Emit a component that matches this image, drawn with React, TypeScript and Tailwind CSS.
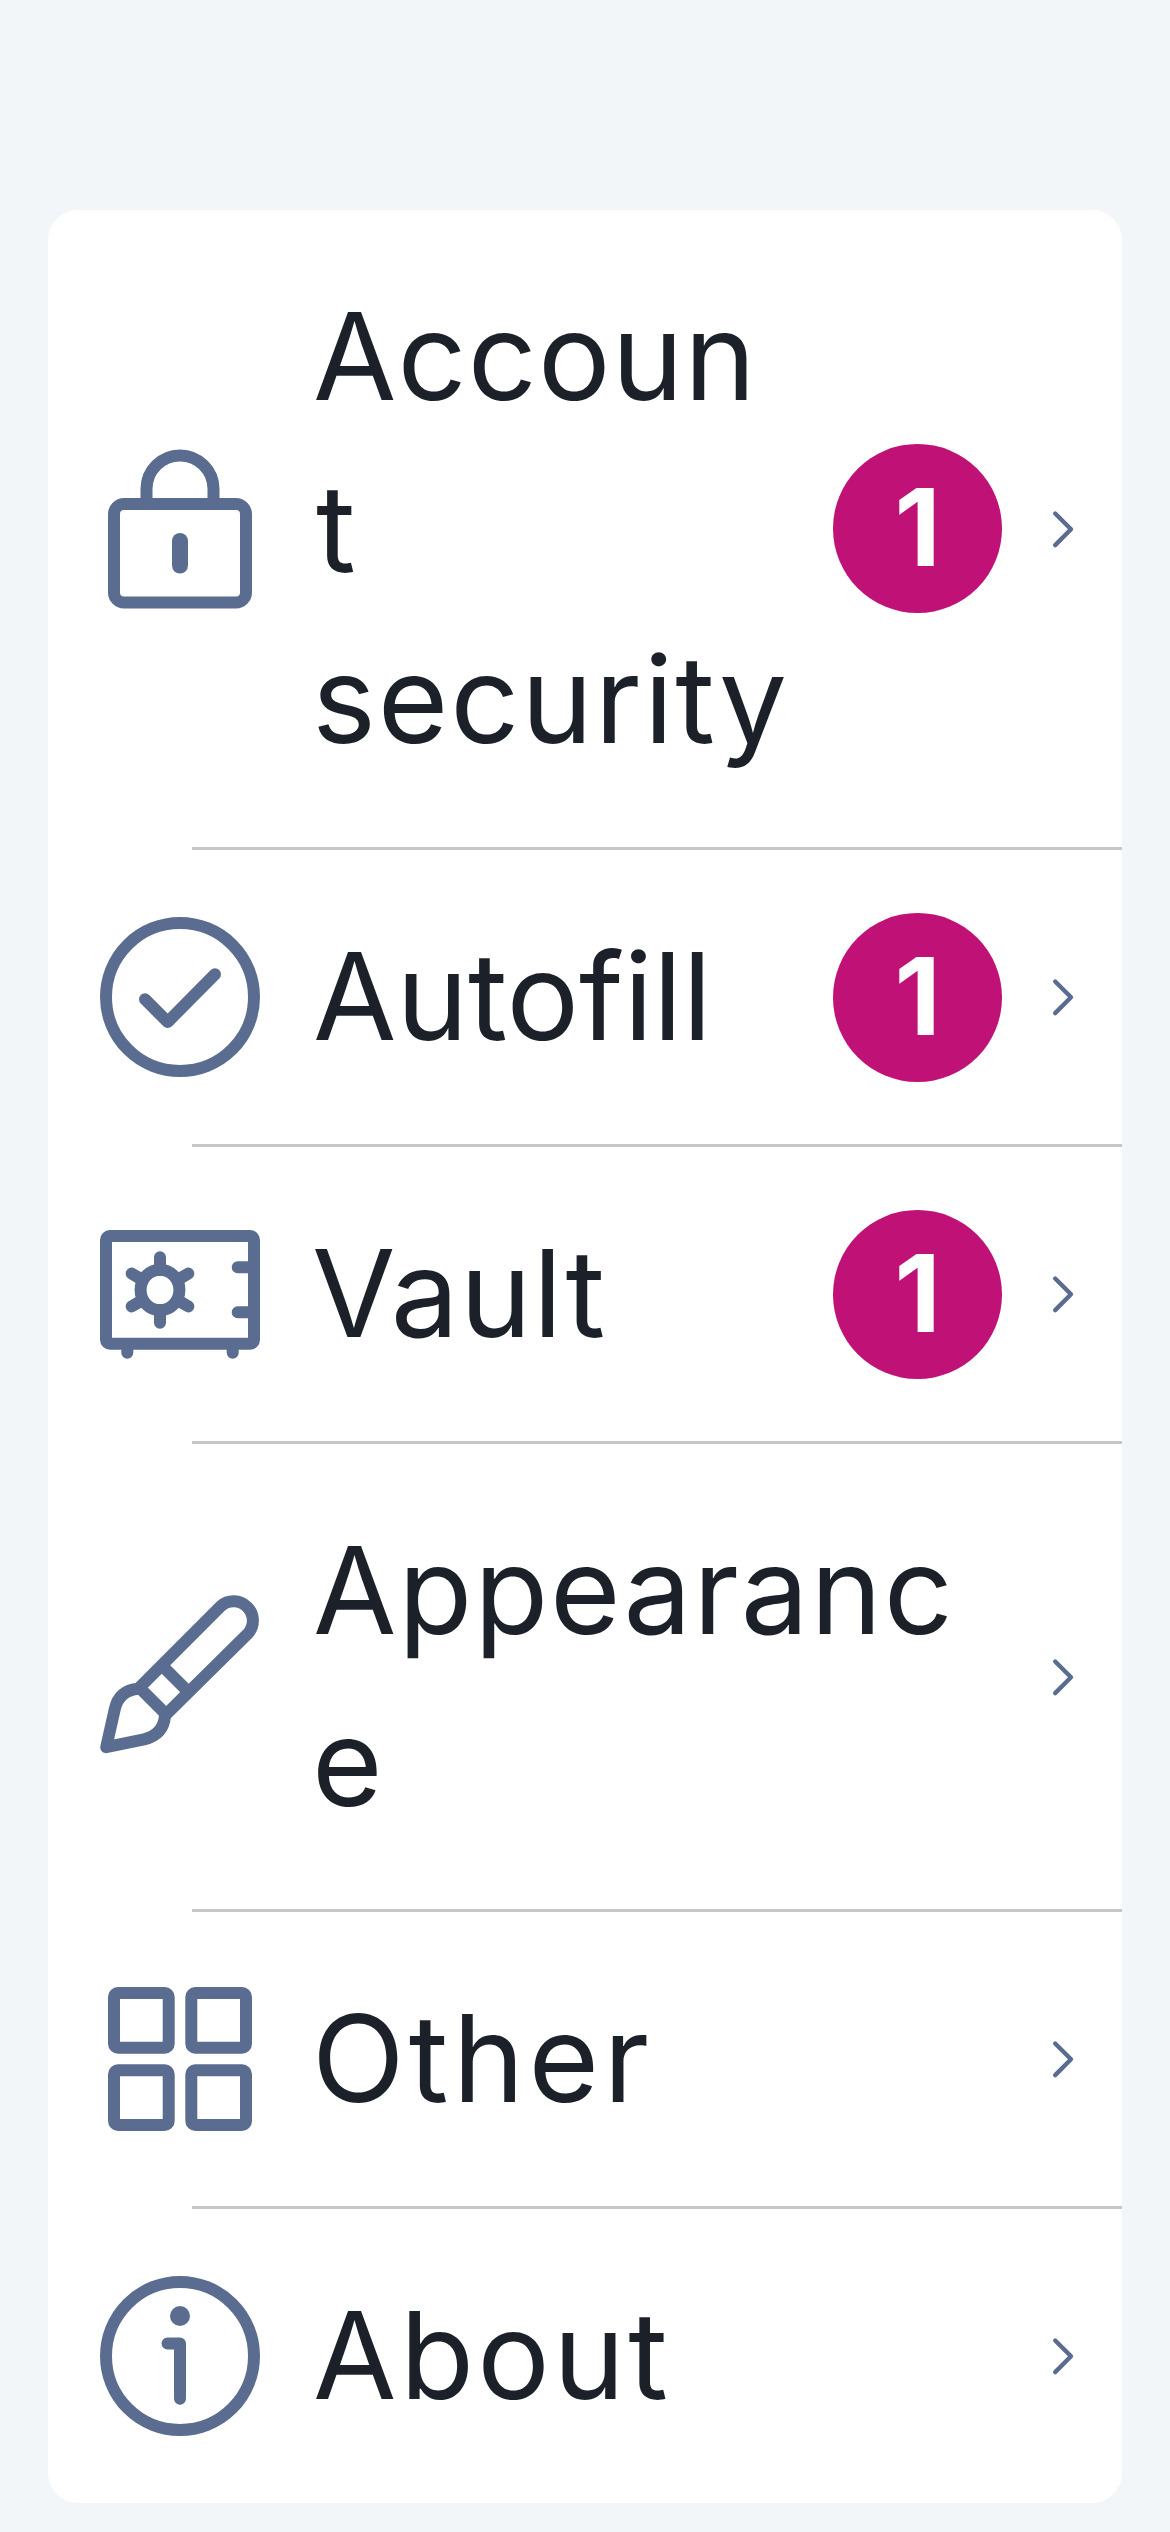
import type { ReactNode } from "react";

function Icon({ children }: { children: ReactNode }) {
  return (
    <svg
      className="h-40 w-40 shrink-0 overflow-visible text-[#5a6d91]"
      viewBox="0 0 160 160"
      fill="none"
      stroke="currentColor"
      strokeWidth={12}
      strokeLinecap="round"
      strokeLinejoin="round"
    >
      {children}
    </svg>
  );
}

const lock = (
  <Icon>
    <rect x="14" y="55" width="132" height="98.5" rx="10" />
    <path d="M46.5 52V40a33.5 33.5 0 0 1 67 0v12" strokeLinecap="butt" />
    <rect x="72" y="84" width="16" height="40.5" rx="8" fill="currentColor" stroke="none" />
  </Icon>
);

const check = (
  <Icon>
    <circle cx="80" cy="80" r="74" />
    <path d="M45 82.3 67.7 105 115 57.2" />
  </Icon>
);

const vault = (
  <Icon>
    <rect x="6" y="22" width="148" height="107.7" rx="4" />
    <ellipse cx="60" cy="76" rx="19.4" ry="20.2" />
    <path d="M60 56V43.3M60 96v12.7M42.7 66 31.7 59.6M77.3 66l11-6.4M42.7 86l-11 6.4M77.3 86l11 6.4" />
    <path d="M150 53.3h-12.3M150 98.3h-12.3M27.3 132v6.7M132.7 132v6.7" />
  </Icon>
);

const brush = (
  <Icon>
    <path d="M38.3 91.8 120.7 9.2a19.3 19.3 0 0 1 27.3 27.2L65 118.5" />
    <path d="M61.7 68.3 89 95.6M38.3 89.5 66 117.2" strokeLinecap="butt" />
    <path d="M38.3 91.8C25 93 17.5 100 14.8 112L6.2 150.2 44 142.3C56 139.5 64 132 65 118.5" />
  </Icon>
);

const grid = (
  <Icon>
    <rect x="14" y="14" width="54.7" height="54.7" rx="4" />
    <rect x="91.3" y="14" width="54.7" height="54.7" rx="4" />
    <rect x="14" y="91.3" width="54.7" height="54.7" rx="4" />
    <rect x="91.3" y="91.3" width="54.7" height="54.7" rx="4" />
  </Icon>
);

const info = (
  <Icon>
    <circle cx="80" cy="80" r="74" />
    <circle cx="80" cy="40" r="10" fill="currentColor" stroke="none" />
    <path d="M67.5 67.5H80v55.2" />
  </Icon>
);

type Line = { text: string; style: string };
type Item = { icon: ReactNode; lines: Line[]; badge?: number; height: string };

const items: Item[] = [
  {
    icon: lock,
    height: "h-[637px]",
    badge: 1,
    lines: [
      { text: "Accoun", style: "tracking-[1.1px]" },
      { text: "t", style: "pl-[3px]" },
      { text: "security", style: "-ml-px tracking-[1.9px]" },
    ],
  },
  { icon: check, height: "h-[294px]", badge: 1, lines: [{ text: "Autofill", style: "tracking-[0px]" }] },
  { icon: vault, height: "h-[294px]", badge: 1, lines: [{ text: "Vault", style: "-ml-px tracking-[1.4px]" }] },
  {
    icon: brush,
    height: "h-[465px]",
    lines: [
      { text: "Appearanc", style: "tracking-[1.8px]" },
      { text: "e", style: "-ml-px" },
    ],
  },
  { icon: grid, height: "h-[294px]", lines: [{ text: "Other", style: "-ml-px tracking-[4.3px]" }] },
  { icon: info, height: "h-[294px]", lines: [{ text: "About", style: "tracking-[3.4px]" }] },
];

export default function App() {
  return (
    <main className="h-[2532px] w-[1170px] overflow-hidden bg-[#f3f6f9] px-12 pt-[210px] font-['Inter',sans-serif]">
      <ul className="overflow-hidden rounded-[30px] bg-white">
        {items.map((item, i) => (
          <li key={i}>
            <div className={`flex items-center pr-[44px] pl-[52px] ${item.height}`}>
              {item.icon}
              <div className="ml-[53px] flex min-w-0 flex-1 flex-col text-[121px] leading-[171.8px] whitespace-nowrap text-[#1b2029]">
                {item.lines.map((line) => (
                  <span key={line.text} className={line.style}>
                    {line.text}
                  </span>
                ))}
              </div>
              {item.badge !== undefined && (
                <span className="mr-[46px] flex size-[169px] shrink-0 items-center justify-center rounded-full bg-[#c01176] pb-0.5 text-[107px] leading-none font-bold text-white">
                  {item.badge}
                </span>
              )}
              <svg
                className="h-[40px] w-[30px] shrink-0 text-[#5a6d91]"
                viewBox="0 0 30 40"
                fill="none"
                stroke="currentColor"
                strokeWidth={4.4}
                strokeLinecap="round"
                strokeLinejoin="round"
              >
                <path d="M7.2 4.5 23 20.3 7.2 36.1" />
              </svg>
            </div>
            {i < items.length - 1 && <div className="ml-36 h-[3px] bg-[#c6c6c8]" />}
          </li>
        ))}
      </ul>
    </main>
  );
}
